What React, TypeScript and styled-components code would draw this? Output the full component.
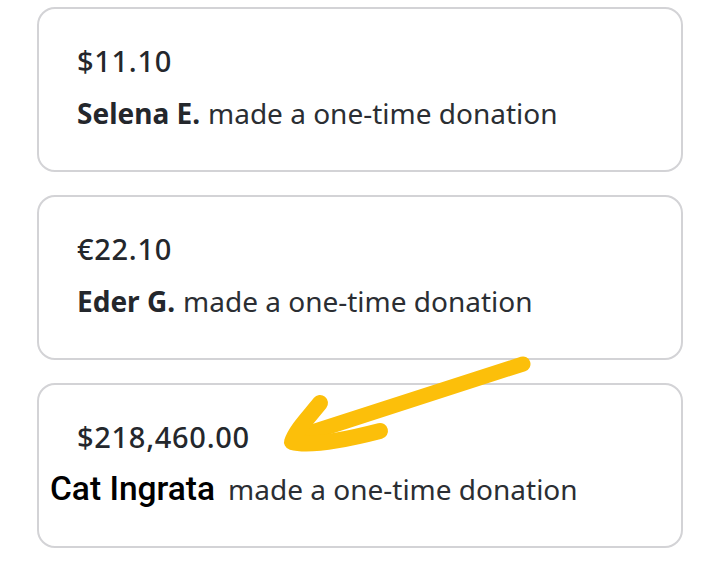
import styled, { createGlobalStyle } from 'styled-components'

const GlobalStyle = createGlobalStyle`
  html, body {
    margin: 0;
    padding: 0;
    background: #ffffff;
  }
  body {
    font-family: "Noto Sans", "Open Sans", sans-serif;
    color: #1f2328;
  }
`

interface Donation {
  amount: string
  name: string
  highlight?: boolean
}

const donations: Donation[] = [
  { amount: '$11.10', name: 'Selena E.' },
  { amount: '€22.10', name: 'Eder G.' },
  { amount: '$218,460.00', name: 'Cat Ingrata', highlight: true },
]

function Arrow() {
  return (
    <ArrowSvg width="720" height="567" viewBox="0 0 720 567">
      <path
        d="M523 364 C460 385 380 410 300 436"
        stroke="#fcbf0a"
        strokeWidth="15"
        strokeLinecap="round"
        fill="none"
      />
      <path
        d="M320 403 C308 418 296 430 292 442 C310 447 345 440 380 431"
        stroke="#fcbf0a"
        strokeWidth="16"
        strokeLinecap="round"
        strokeLinejoin="round"
        fill="none"
      />
    </ArrowSvg>
  )
}

export default function App() {
  return (
    <>
      <GlobalStyle />
      <Page>
        {donations.map((d) => (
          <Card key={d.amount}>
            <Amount>{d.amount}</Amount>
            <Line $highlight={d.highlight}>
              <Name $highlight={d.highlight}>{d.name}</Name>
              <Rest>made a one-time donation</Rest>
            </Line>
          </Card>
        ))}
        <Arrow />
      </Page>
    </>
  )
}

const Page = styled.div`
  position: relative;
  width: 720px;
  height: 567px;
  box-sizing: border-box;
  padding: 7px 37px 0 37px;
  display: flex;
  flex-direction: column;
  gap: 23px;
  overflow: hidden;
`

const Card = styled.div`
  box-sizing: border-box;
  height: 165px;
  border: 2px solid #d3d3d6;
  border-radius: 18px;
  padding: 35px 38px 0 38px;
  display: flex;
  flex-direction: column;
  gap: 18px;
`

const Amount = styled.div`
  font-size: 29px;
  line-height: 34px;
  font-weight: 500;
  letter-spacing: 0.7px;
  color: #24272c;
`

const Line = styled.div<{ $highlight?: boolean }>`
  display: flex;
  align-items: baseline;
  gap: 8px;
  margin-left: ${(p) => (p.$highlight ? '-27px' : '0')};
  font-size: 28px;
  line-height: 34px;
  white-space: nowrap;
`

const Name = styled.span<{ $highlight?: boolean }>`
  font-family: ${(p) => (p.$highlight ? 'Roboto, sans-serif' : 'inherit')};
  font-size: ${(p) => (p.$highlight ? '33.5px' : '28px')};
  font-weight: ${(p) => (p.$highlight ? 500 : 700)};
  color: ${(p) => (p.$highlight ? '#000000' : '#24272c')};
  margin-right: ${(p) => (p.$highlight ? '5px' : '0')};
`

const Rest = styled.span`
  color: #2b2e33;
  font-weight: 400;
`

const ArrowSvg = styled.svg`
  position: absolute;
  left: 0;
  top: 0;
  pointer-events: none;
`
